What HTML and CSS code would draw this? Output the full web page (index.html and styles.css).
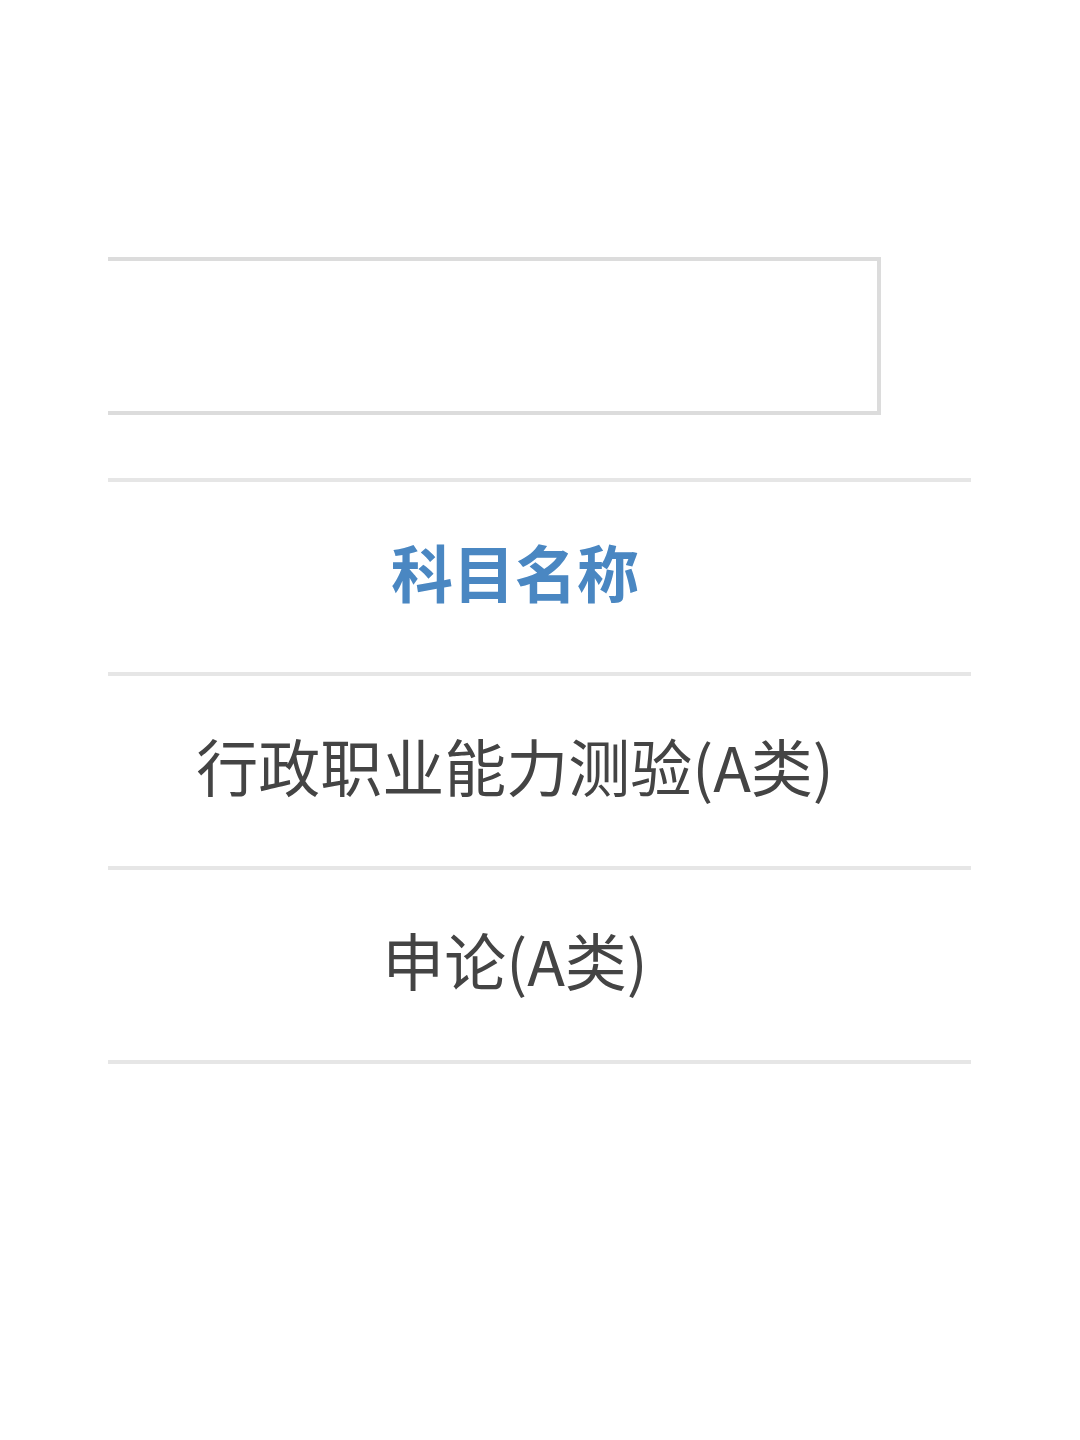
FILE: index.html
```html
<!DOCTYPE html>
<html lang="zh-CN">
<head>
    <meta charset="UTF-8">
    <meta name="viewport" content="width=device-width, initial-scale=1.0">
    <title>科目名称</title>
    <link rel="stylesheet" href="styles.css">
</head>
<body>
    <div class="page">
        <!-- search / input box, left edge is cut off in the shot -->
        <div class="inputBox"></div>

        <div class="subjects">
            <div class="row head">科目名称</div>
            <div class="row">行政职业能力测验(A类)</div>
            <div class="row">申论(A类)</div>
        </div>
    </div>
</body>
</html>
```

FILE: styles.css
```css
body {
    margin: 0;
    background-color: #fff;
    font-family: "Noto Sans CJK SC", "Noto Sans", sans-serif;
}

.page {
    margin-left: 108px;
    width: 863px;
    padding-top: 257px;
}

.inputBox {
    width: 769px;
    height: 150px;
    border: 4px solid #dcdcdc;
    border-left: none;
}

.subjects {
    margin-top: 63px;
}

.row {
    height: 178px;
    padding-bottom: 12px;
    border-top: 4px solid #e6e6e6;
    display: flex;
    align-items: center;
    justify-content: center;
    padding-right: 49px;
    font-size: 62px;
    color: #444;
}

.row:last-child {
    border-bottom: 4px solid #e6e6e6;
}

.head {
    color: #4a87c2;
    font-weight: bold;
    font-size: 62px;
}
```
